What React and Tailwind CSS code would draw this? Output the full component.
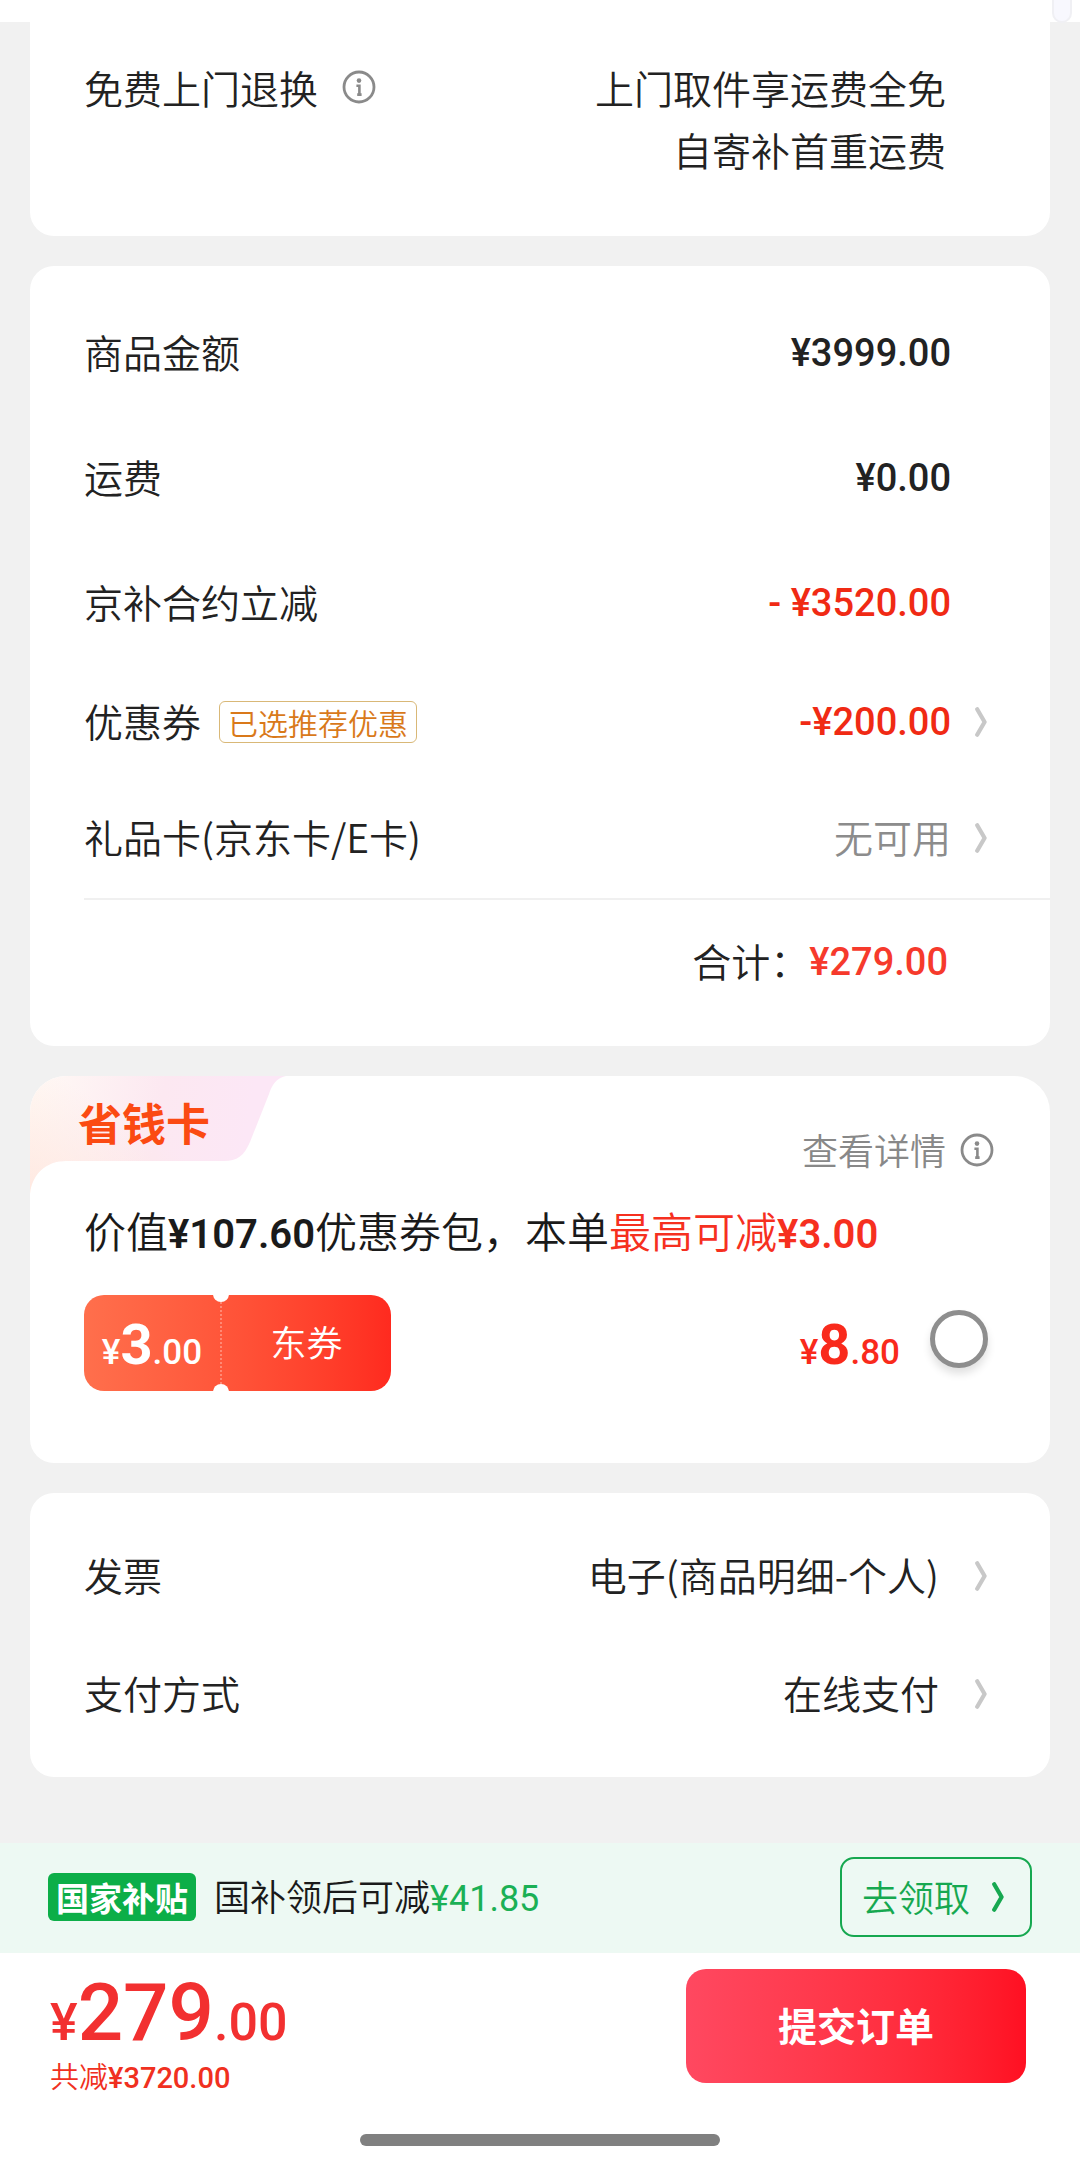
import React, { useState } from 'react';

const priceRows = [
  { label: '商品金额', value: '¥3999.00', color: 'text-[#222222]' },
  { label: '运费', value: '¥0.00', color: 'text-[#222222]' },
  { label: '京补合约立减', value: '- ¥3520.00', color: 'text-[#f02a14]' },
];

function Chevron({ className }) {
  return (
    <svg className={`h-[30px] w-3 shrink-0 ${className}`} viewBox="0 0 12 30" fill="none" aria-hidden="true">
      <path d="M2.2 2.2 9.6 15 2.2 27.8" stroke="currentColor" strokeWidth="4.2" strokeLinecap="round" strokeLinejoin="round" />
    </svg>
  );
}

function InfoIcon() {
  return (
    <svg className="size-[34px] shrink-0" viewBox="0 0 34 34" fill="none" stroke="#8a8a8a" aria-hidden="true">
      <circle cx="17" cy="17" r="15" strokeWidth="2.8" />
      <circle cx="17" cy="10.6" r="2.3" fill="#8a8a8a" stroke="none" />
      <path d="M14.4 15.8h3v8.2M15.2 24.6h4.4" strokeWidth="2.6" />
    </svg>
  );
}

// Small currency sign, large integer part and small decimals
function Price({ whole, cents, small, large }) {
  return (
    <span className="flex items-baseline font-['Roboto','Noto_Sans_CJK_SC',sans-serif] font-medium leading-none">
      <span className={small}>¥</span>
      <span className={large}>{whole}</span>
      <span className={small}>.{cents}</span>
    </span>
  );
}

function ServiceCard() {
  return (
    <section className="mx-[30px] flex justify-between rounded-b-[24px] bg-white pt-[34px] pr-[104px] pb-14 pl-[54px] text-[39px] leading-[62px]">
      <div className="flex h-[62px] items-center gap-6">
        <span>免费上门退换</span>
        <button type="button" aria-label="退换说明">
          <InfoIcon />
        </button>
      </div>
      <p className="text-right">
        上门取件享运费全免
        <br />
        自寄补首重运费
      </p>
    </section>
  );
}

function AmountCard() {
  return (
    <section className="mx-[30px] rounded-[24px] bg-white pt-[25px] pb-[22px] pl-[54px] text-[39px]">
      {priceRows.map((row) => (
        <div key={row.label} className="flex h-[125px] items-center justify-between pr-[99px]">
          <span className="pb-1">{row.label}</span>
          <span className={`font-['Roboto','Noto_Sans_CJK_SC',sans-serif] text-[38px] font-medium ${row.color}`}>{row.value}</span>
        </div>
      ))}

      {/* Coupon */}
      <button type="button" className="flex h-[116px] w-full items-center pr-[63px] pb-1">
        <span className="pb-1">优惠券</span>
        <span className="ml-[18px] rounded-md border border-[#d9b877] px-2 text-[30px] leading-[40px] text-[#d9791a]">
          已选推荐优惠
        </span>
        <span className="mr-6 ml-auto font-['Roboto','Noto_Sans_CJK_SC',sans-serif] text-[38px] font-medium text-[#f02a14]">
          -¥200.00
        </span>
        <Chevron className="text-[#c8c8c8]" />
      </button>

      {/* Gift card */}
      <button type="button" className="flex h-[116px] w-full items-center pr-[63px] pb-1">
        <span className="pb-1">礼品卡(京东卡/E卡)</span>
        <span className="mr-6 ml-auto pb-1 text-[#8c8c8c]">无可用</span>
        <Chevron className="text-[#c8c8c8]" />
      </button>

      <div className="flex h-[126px] items-center justify-end border-t-2 border-[#f0f0f0] pr-[102px]">
        <span className="pb-1">合计：</span>
        <span className="font-['Roboto','Noto_Sans_CJK_SC',sans-serif] text-[38px] font-medium text-[#f63a2c]">¥279.00</span>
      </div>
    </section>
  );
}

function SavingsCard() {
  const [checked, setChecked] = useState(false);

  return (
    <section className="relative mx-[30px] overflow-hidden rounded-t-[36px] rounded-b-[24px] bg-white pr-14 pb-[72px] pl-[54px]">
      {/* Slanted tab behind the title */}
      <svg className="absolute top-0 left-0 h-[120px] w-[260px]" viewBox="0 0 260 120" aria-hidden="true">
        <defs>
          <linearGradient id="tab" x1="0" y1="0" x2="220" y2="40" gradientUnits="userSpaceOnUse">
            <stop offset="0" stopColor="#fffaf5" />
            <stop offset="0.6" stopColor="#fce8f1" />
            <stop offset="1" stopColor="#fce7f6" />
          </linearGradient>
          <linearGradient id="tabFade" x1="60" y1="20" x2="0" y2="110" gradientUnits="userSpaceOnUse">
            <stop offset="0" stopColor="#ffe8e0" stopOpacity="0" />
            <stop offset="1" stopColor="#ffe8e0" stopOpacity="0.9" />
          </linearGradient>
        </defs>
        <path d="M0 0H256C246 2 242 9 239 18L220 66C214 80 207 85 194 85H36C16 85 2 98 0 118Z" fill="url(#tab)" />
        <path d="M0 0H256C246 2 242 9 239 18L220 66C214 80 207 85 194 85H36C16 85 2 98 0 118Z" fill="url(#tabFade)" />
      </svg>

      <div className="relative flex justify-between">
        <h2 className="-ml-[6px] pt-4 text-[44px] leading-[60px] font-bold text-[#fb4a12]">省钱卡</h2>
        <button type="button" className="flex items-center gap-[14px] pt-[46px] text-[36px] leading-[54px] text-[#888888]">
          <span className="pb-0.5">查看详情</span>
          <InfoIcon />
        </button>
      </div>

      <p className="pt-5 text-[42px] leading-[64px] text-[#1a1a1a]">
        价值
        <span className="font-['Roboto','Noto_Sans_CJK_SC',sans-serif] text-[40px] leading-none font-semibold">¥107.60</span>
        优惠券包，本单
        <span className="text-[#f6301f]">
          最高可减
          <span className="font-['Roboto','Noto_Sans_CJK_SC',sans-serif] text-[40px] leading-none font-semibold">¥3.00</span>
        </span>
      </p>

      <div className="flex items-center justify-between pt-[33px] pr-[6px]">
        <div className="relative flex h-24 w-[307px] overflow-hidden rounded-[20px] bg-linear-to-r from-[#ff6f4c] to-[#ff2a1f] text-white">
          <div className="flex w-[138px] items-end justify-center border-r-2 border-dotted border-white/30 pb-[18px]">
            <Price whole="3" cents="00" small="text-[35px]" large="text-[56px] font-bold" />
          </div>
          <div className="flex flex-1 items-center justify-center pb-1 text-[36px]">东券</div>
          <span className="absolute -top-[9px] left-[129px] size-4 rounded-full bg-white"></span>
          <span className="absolute -bottom-[9px] left-[129px] size-4 rounded-full bg-white"></span>
        </div>
        <label className="flex items-center gap-[30px] text-[#f92a1c]">
          <span className="pt-1">
            <Price whole="8" cents="80" small="text-[35px]" large="text-[56px] font-bold" />
          </span>
          <input
            type="checkbox"
            checked={checked}
            onChange={(e) => setChecked(e.target.checked)}
            className="mb-2 size-[58px] appearance-none rounded-full border-[5px] border-[#8e8e8e] bg-white shadow-[0_6px_8px_rgba(0,0,0,0.12)] checked:border-[#f92a1c] checked:bg-[#f92a1c]"
          />
        </label>
      </div>
    </section>
  );
}

function PaymentCard() {
  return (
    <section className="mx-[30px] rounded-[24px] bg-white py-6 pr-[63px] pl-[54px] text-[39px]">
      <button type="button" className="flex h-[118px] w-full items-center">
        <span className="pb-1">发票</span>
        <span className="mr-9 ml-auto pb-1">电子(商品明细-个人)</span>
        <Chevron className="text-[#c8c8c8]" />
      </button>
      <button type="button" className="flex h-[118px] w-full items-center">
        <span className="pb-1">支付方式</span>
        <span className="mr-9 ml-auto pb-1">在线支付</span>
        <Chevron className="text-[#c8c8c8]" />
      </button>
    </section>
  );
}

function Footer() {
  return (
    <footer className="mt-auto bg-white">
      {/* Subsidy bar */}
      <div className="flex h-[110px] items-center bg-[#edf9f3] pr-12 pb-0.5 pl-12">
        <span className="rounded-md bg-[#0cae48] px-2 text-[33px] leading-[48px] font-bold text-white">国家补贴</span>
        <p className="ml-[18px] text-[36px] text-[#1a1a1a]">
          国补领后可减
          <span className="font-['Roboto','Noto_Sans_CJK_SC',sans-serif] font-normal text-[#1bb055]">¥41.85</span>
        </p>
        <button
          type="button"
          className="ml-auto flex h-20 w-48 items-center justify-center gap-[22px] rounded-[14px] border-2 border-[#16a850] pr-[6px] text-[36px] text-[#16a850]"
        >
          <span className="pb-0.5">去领取</span>
          <Chevron className="" />
        </button>
      </div>

      {/* Total and submit */}
      <div className="flex items-start justify-between pt-4 pr-[54px] pl-[50px]">
        <div className="pt-1 text-[#f23030]">
          <Price whole="279" cents="00" small="text-[52px]" large="text-[80px]" />
          <p className="mt-2 font-['Roboto','Noto_Sans_CJK_SC',sans-serif] text-[29px] leading-[34px] font-medium text-[#f03020]">
            <span className="font-[350]">共减</span>¥3720.00
          </p>
        </div>
        <button
          type="button"
          className="h-[114px] w-[340px] rounded-[20px] bg-linear-to-r from-[#ff4860] to-[#ff0f22] pb-1 text-[39px] font-bold text-white"
        >
          提交订单
        </button>
      </div>

      <div className="mx-auto mt-[39px] mb-5 h-3 w-1/3 rounded-full bg-[#808080]"></div>
    </footer>
  );
}

function App() {
  return (
    <div className="relative flex min-h-screen flex-col bg-[#f1f1f1] font-['Noto_Sans_CJK_SC',sans-serif] font-[350] text-[#222222]">
      <div className="h-[22px] bg-white"></div>
      <div className="absolute top-0 right-2 h-[23px] w-5 rounded-b-full border-2 border-t-0 border-[#f0f0f4] bg-[#f8f8fe]"></div>
      <main className="flex flex-col gap-[30px] pb-[66px]">
        <ServiceCard />
        <AmountCard />
        <SavingsCard />
        <PaymentCard />
      </main>
      <Footer />
    </div>
  );
}

export default App;
